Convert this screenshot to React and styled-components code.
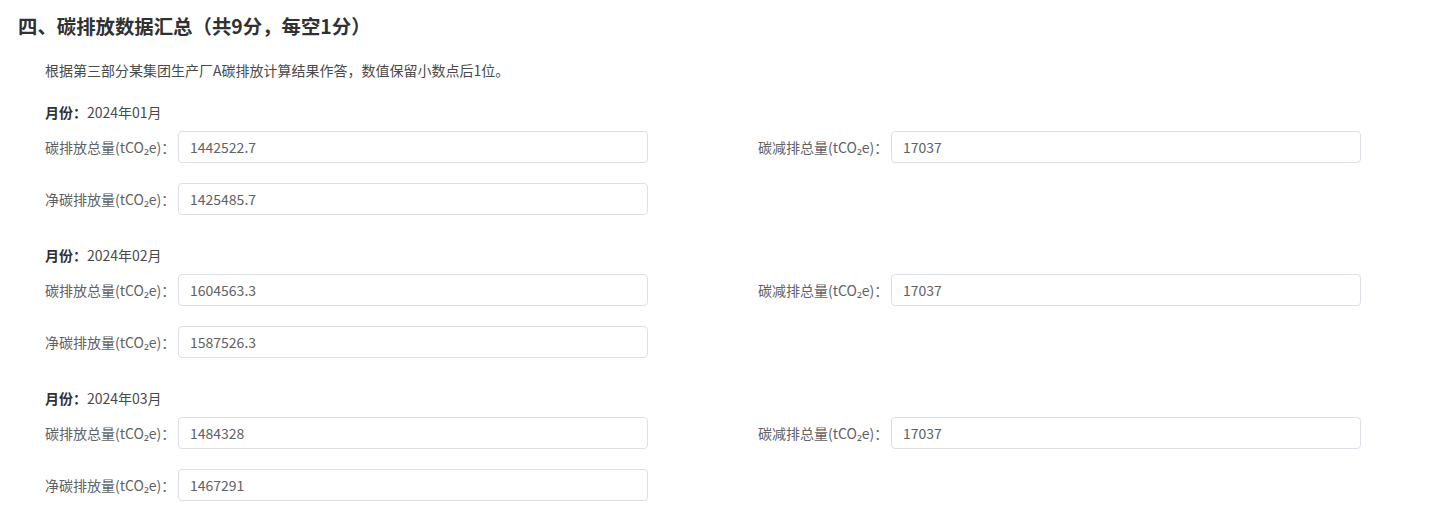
import React from 'react'
import styled, { createGlobalStyle } from 'styled-components'

const GlobalStyle = createGlobalStyle`
  body {
    margin: 0;
    background: #fff;
    font-family: "Noto Sans CJK SC", "Noto Sans", "Liberation Sans", sans-serif;
  }
`

const Page = styled.div`
  padding: 12px 0 0 18px;
`

const Title = styled.h2`
  margin: 0;
  font-size: 19.4px;
  line-height: 28px;
  font-weight: 700;
  color: #303133;
`

const Body = styled.div`
  padding-left: 27px;
`

const Intro = styled.p`
  margin: 20px 0 22px;
  font-size: 14px;
  line-height: 20px;
  color: #4a4a4a;
`

const MonthBlock = styled.section`
  margin-bottom: 30px;
`

const MonthLine = styled.div`
  font-size: 14px;
  line-height: 20px;
  color: #4a4a4a;

  b {
    color: #303133;
    font-weight: 700;
  }
`

const Fields = styled.div`
  display: grid;
  grid-template-columns: 713px 603px;
  row-gap: 20px;
  margin-top: 9px;
`

const Field = styled.div`
  display: flex;
  align-items: center;
`

const Label = styled.label`
  width: 133px;
  flex-shrink: 0;
  font-size: 14px;
  line-height: 32px;
  color: #606266;
  white-space: nowrap;
`

const Input = styled.input`
  width: 470px;
  height: 32px;
  box-sizing: border-box;
  padding: 0 11px 1px;
  border: 1px solid #dcdfe6;
  border-radius: 4px;
  background: #fff;
  font-family: inherit;
  font-size: 14px;
  color: #606266;
  outline: none;
`

const months = [
  { month: '2024年01月', total: '1442522.7', reduce: '17037', net: '1425485.7' },
  { month: '2024年02月', total: '1604563.3', reduce: '17037', net: '1587526.3' },
  { month: '2024年03月', total: '1484328', reduce: '17037', net: '1467291' },
]

const FormField = ({ label, value }) => (
  <Field>
    <Label>{label}</Label>
    <Input readOnly defaultValue={value} />
  </Field>
)

export default function App() {
  return (
    <>
      <GlobalStyle />
      <Page>
        <Title>四、碳排放数据汇总（共9分，每空1分）</Title>
        <Body>
          <Intro>根据第三部分某集团生产厂A碳排放计算结果作答，数值保留小数点后1位。</Intro>
          {months.map((m) => (
            <MonthBlock key={m.month}>
              <MonthLine>
                <b>月份：</b>{m.month}
              </MonthLine>
              <Fields>
                <FormField label="碳排放总量(tCO₂e)：" value={m.total} />
                <FormField label="碳减排总量(tCO₂e)：" value={m.reduce} />
                <FormField label="净碳排放量(tCO₂e)：" value={m.net} />
              </Fields>
            </MonthBlock>
          ))}
        </Body>
      </Page>
    </>
  )
}
